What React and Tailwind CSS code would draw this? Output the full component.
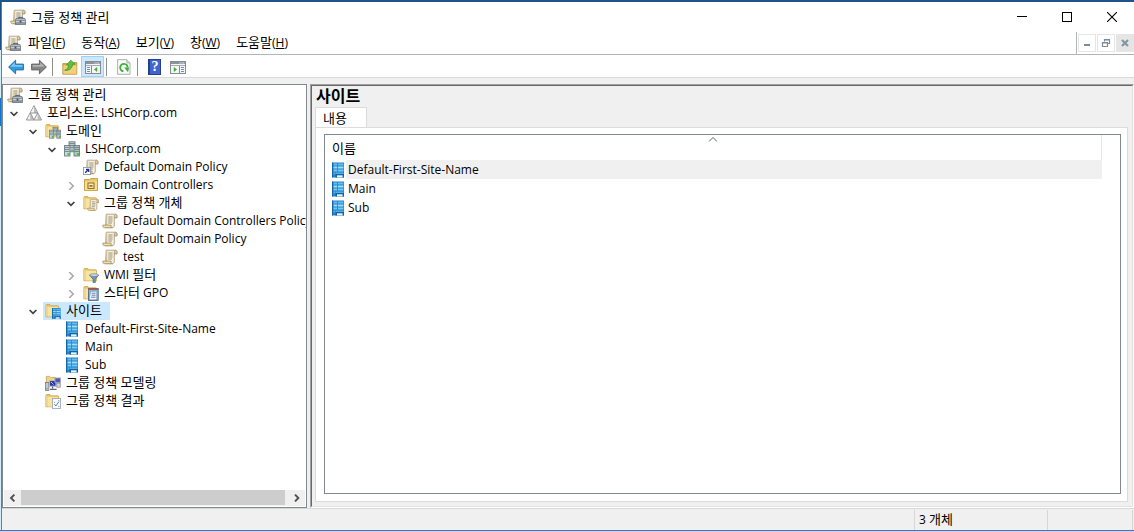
import { useState } from "react";

/* ---------- text ---------- */

/* Hangul runs are set one size up so that they balance the Latin letters. */
function Label({ text }) {
  const parts = text.split(/([가-힣]+(?: [가-힣]+)*)/).filter(Boolean);
  return parts.map((part, i) => (
    <span key={i} className={/[가-힣]/.test(part) ? "text-[13px] leading-none" : ""}>
      {part}
    </span>
  ));
}

/* ---------- icons ---------- */

function Svg({ size = "h-4 w-4", box = "0 0 16 16", children }) {
  return (
    <svg viewBox={box} className={`block shrink-0 ${size}`} aria-hidden="true">
      {children}
    </svg>
  );
}

function ScrollShape() {
  return (
    <>
      <path
        d="M4.2 1.2h8.8c1.2 0 1.9.8 1.9 1.8v1.8h-2.6v7.6c0 1.3-.8 2.3-2.1 2.3H3.5z"
        fill="#f8efd8"
        stroke="#a3967c"
        strokeWidth=".8"
      />
      <path d="M12.3 4.8V3c0-1 .5-1.7 1.3-1.7s1.4.7 1.4 1.7v1.8z" fill="#e0cda0" stroke="#9a8c72" strokeWidth=".7" />
      <path d="M4.6 1.6v10.4" stroke="#cfbf98" strokeWidth="1.2" />
      <path d="M.8 12.1h8.3c-.4.9 0 2.1 1.2 2.6H2.3C1.2 14.7.7 13.4.8 12.1z" fill="#f0dfae" stroke="#a08c5c" strokeWidth=".8" />
      <path d="M6.3 4h4.2M6.3 6h4.2M6.3 8h4.2M6.3 10h3.6" stroke="#8d897c" strokeWidth=".9" />
    </>
  );
}

function ScrollIcon() {
  return (
    <Svg>
      <ScrollShape />
    </Svg>
  );
}

function ConsoleIcon() {
  return (
    <Svg>
      <ScrollShape />
      <path d="M8.6 9.6V8.4h4.2v1.2" fill="none" stroke="#59626b" strokeWidth="1" />
      <path d="M6 9.6h9l.6 2v4H5.4v-4z" fill="#8b97a3" stroke="#59636d" strokeWidth=".7" />
      <path d="M6.2 10.4h8.6" stroke="#c6cfd6" strokeWidth=".8" />
      <path d="M5.8 12.6h9.4" stroke="#dfe4e8" strokeWidth=".8" />
      <rect x="9.6" y="11.6" width="1.8" height="2" fill="#474f57" />
    </Svg>
  );
}

function LinkedScrollIcon() {
  return (
    <Svg>
      <ScrollShape />
      <rect x=".4" y="8.4" width="7.2" height="7.2" fill="#fff" stroke="#8b9099" strokeWidth=".8" />
      <path d="M2.2 13.8l3-3M3 10.4h2.7v2.7" fill="none" stroke="#1d2f8f" strokeWidth="1.3" />
    </Svg>
  );
}

function ForestIcon() {
  return (
    <Svg>
      <path d="M8 .6L15.6 15H.4z" fill="#dedede" stroke="#808080" strokeWidth=".8" />
      <path d="M8 1.4v6.4H4.6zM4.3 8.8v5.4H1.4zM11.7 8.8v5.4H8.8z" fill="#f4f4f4" />
      <path d="M8 1.4v6.4h3.4zM4.3 8.8v5.4h2.9zM11.7 8.8v5.4h2.9z" fill="#bcbcbc" />
      <path d="M4.4 8h7.2L8 14.9z" fill="#fff" stroke="#808080" strokeWidth=".8" />
    </Svg>
  );
}

function FolderShape() {
  return (
    <>
      <path d="M.8 2.6c0-.6.3-1 .9-1H5l1.2 1.2h6.6c.5 0 .8.3.8.8v10.2H.8z" fill="#e9c76c" stroke="#c39a3c" strokeWidth=".7" />
      <path d="M2.4 3.8h10.8v9.7H2.4z" fill="#f8e3a0" />
      <path d="M1.2 2.6v11" stroke="#fbeec2" strokeWidth=".7" />
    </>
  );
}

function ServersShape() {
  return (
    <>
      <rect x="5" y=".8" width="6" height="10" fill="#c2d0d6" stroke="#5b6d75" strokeWidth=".8" />
      <rect x=".6" y="4.4" width="5.4" height="10.6" fill="#cbd8dd" stroke="#5b6d75" strokeWidth=".8" />
      <rect x="10" y="4.4" width="5.4" height="10.6" fill="#b7c5cb" stroke="#5b6d75" strokeWidth=".8" />
      <path
        d="M5.4 2.6h5.2M5.4 4.6h5.2M6.4 6.6h3.2M1 6.4h4.6M1 8.4h4.6M1 10.4h4.6M10.4 6.4H15M10.4 8.4H15M10.4 10.4H15"
        stroke="#5d7078"
        strokeWidth=".8"
      />
      <path d="M3.4 12h2.2v2.6H3.4zM12.8 12H15v2.6h-2.2zM7.2 8.4h2v2h-2z" fill="#4fc14a" />
    </>
  );
}

function DomainIcon() {
  return (
    <Svg>
      <ServersShape />
    </Svg>
  );
}

function DomainsFolderIcon() {
  return (
    <Svg>
      <FolderShape />
      <g transform="translate(4.2 3.8) scale(.76)">
        <ServersShape />
      </g>
    </Svg>
  );
}

function OuIcon() {
  return (
    <Svg>
      <path d="M1.5 2.5h5l1.2-1h6.8v12h-13z" fill="#e9c76c" stroke="#c39a3c" strokeWidth=".9" />
      <path d="M2 4.5h12v8.6H2z" fill="#f7de90" />
      <rect x="5" y="6" width="6" height="5.4" fill="#fdf0c0" stroke="#866514" strokeWidth="1" />
      <rect x="6.4" y="8" width="3.2" height="1.8" fill="#9a7a22" />
    </Svg>
  );
}

function GpoFolderIcon() {
  return (
    <Svg>
      <FolderShape />
      <g transform="translate(4 3.6) scale(.8)">
        <ScrollShape />
      </g>
    </Svg>
  );
}

function WmiFolderIcon() {
  return (
    <Svg>
      <FolderShape />
      <path d="M6.6 8.2h9l-3.3 4v3.3h-2.2v-3.3z" fill="#7796b5" stroke="#46617d" strokeWidth=".7" />
      <ellipse cx="11.1" cy="8.1" rx="4.4" ry="1.3" fill="#d5e2ee" stroke="#5f7b97" strokeWidth=".7" />
    </Svg>
  );
}

function StarterFolderIcon() {
  return (
    <Svg>
      <FolderShape />
      <rect x="5.4" y="3.6" width="9.8" height="11.8" fill="#9db8d6" stroke="#3d5e86" strokeWidth=".8" />
      <path d="M5 4.2h10.4" stroke="#a8543c" strokeWidth="1.4" />
      <path d="M7.6 6.2h6.2v8.6H6.4v-2z" fill="#f6f9fd" stroke="#5b7aa3" strokeWidth=".6" />
      <path d="M8.6 8.2h4M8.6 10.2h4M8 12.2h4.6" stroke="#4c71a2" strokeWidth=".9" />
    </Svg>
  );
}

function SiteShape() {
  return (
    <>
      <rect x="0" y="0" width="12" height="15" fill="#2583cb" />
      <rect x="0" y="0" width="1" height="15" fill="#1764a8" />
      <path d="M1.6 1h3.6v2H1.6zM6 1h5.4v2H6z" fill="#5fbdf0" />
      <path d="M1.6 4h3.6v2H1.6zM6 4h5.4v2H6z" fill="#9be0fb" />
      <path d="M1.6 7h3.6v2H1.6zM6 7h5.4v2H6z" fill="#6fcaf5" />
      <path d="M1.6 10h1.8v2H1.6zM4 10h7.4v1.4H4z" fill="#4fb0e6" />
      <path d="M3.6 11.6H12V15H3.6z" fill="#175f9f" />
      <path d="M5 12.8h5.6V15H5z" fill="#e3f5fd" />
    </>
  );
}

function SiteIcon() {
  return (
    <Svg>
      <g transform="translate(2 0.5)">
        <SiteShape />
      </g>
    </Svg>
  );
}

function SitesFolderIcon() {
  return (
    <Svg>
      <FolderShape />
      <g transform="translate(7 5) scale(.72)">
        <SiteShape />
      </g>
    </Svg>
  );
}

function ModelingIcon() {
  return (
    <Svg>
      <path d="M1.4 1.4h3.2l1 1h4.6v7H1.4z" fill="#f2d581" stroke="#c39a3c" strokeWidth=".7" />
      <rect x=".5" y="7.4" width="3.4" height="8" fill="#c5c9cf" stroke="#6c7078" strokeWidth=".7" />
      <rect x="4.6" y="5.6" width="6.4" height="5.6" fill="#2336a8" stroke="#b7bcc6" strokeWidth="1" />
      <path d="M6 7l2.6 2.6" stroke="#a9bcf5" strokeWidth="1" />
      <rect x="10" y="3" width="5.4" height="4.6" fill="#4c5bb4" stroke="#a2a7b4" strokeWidth=".9" />
      <rect x="11.8" y="8.2" width="3.4" height="4" fill="#d4d7dc" stroke="#7b7f88" strokeWidth=".7" />
      <path d="M7.6 11.4v2M5 14.4h6.6" stroke="#5d626b" strokeWidth="1.2" />
      <path d="M1.2 13.8h1.4" stroke="#39b54a" strokeWidth="1.2" />
    </Svg>
  );
}

function ResultsIcon() {
  return (
    <Svg>
      <FolderShape />
      <rect x="7.4" y="5.4" width="8.2" height="10" fill="#fbfcfe" stroke="#97a1ad" strokeWidth=".8" />
      <path d="M9 9.4h1.2M13 7.6h1.4M13 13.4h1.4" stroke="#8aa0ba" strokeWidth=".9" />
      <path d="M9.2 11l1.7 2 3-4.4" fill="none" stroke="#5b82b6" strokeWidth="1" />
    </Svg>
  );
}

/* toolbar icons */

function ArrowIcon({ dir }) {
  const back = dir === "back";
  return (
    <Svg>
      <g transform={back ? undefined : "matrix(-1 0 0 1 16 0)"}>
        <path
          d="M.6 8l7-6.8v3.9h7.8v5.8H7.6v3.9z"
          fill={back ? "#2f9be0" : "#858585"}
          stroke={back ? "#2a6f9f" : "#666"}
          strokeWidth="1"
          strokeLinejoin="round"
        />
        <path d="M2.2 7.8l4.6-4.5v2.8h7.6v1.7z" fill={back ? "#7cc8f5" : "#b3b3b3"} />
      </g>
    </Svg>
  );
}

function UpFolderIcon() {
  return (
    <Svg>
      <path d="M.8 4.6h6.4l1.2-1h6.4v11.6H.8z" fill="#d9b04c" stroke="#b98f35" strokeWidth=".8" />
      <path d="M1.4 6.4h13v8.4h-13z" fill="#f1d07a" />
      <path d="M2.6 11.2c2.4-.6 3.8-2.6 4-5.2H4.4L8.8 1.2l4.2 4h-2.4c-.2 4-3.6 7-8 6z" fill="#5cc140" stroke="#3c8f2e" strokeWidth=".7" />
    </Svg>
  );
}

function PaneIcon({ side }) {
  const left = side === "left";
  return (
    <Svg>
      <rect x=".5" y="2.5" width="15" height="12" fill="#f5f5f5" stroke="#858c94" />
      <path d="M1 3h14v2H1z" fill="#8b939c" />
      <path d="M9.5 4h1M11.5 4h1M13.2 4h1" stroke="#fff" />
      <path d="M1 6.5h14" stroke="#a4abb3" />
      {left ? (
        <>
          <path d="M6.5 7v7.5" stroke="#858c94" />
          <path d="M2 8.5h3M2 10.5h3M2 12.5h3" stroke="#6a8fbf" />
          <path d="M12.2 8v5L9 10.5z" fill="#3eac3a" />
        </>
      ) : (
        <>
          <path d="M9.5 7v7.5" stroke="#858c94" />
          <path d="M11 8.5h3M11 10.5h3M11 12.5h3" stroke="#6a8fbf" />
          <path d="M3.8 8v5L7 10.5z" fill="#3eac3a" />
        </>
      )}
    </Svg>
  );
}

function RefreshIcon() {
  return (
    <Svg>
      <path d="M1.6.7h9.2L14 3.9v11.4H1.6z" fill="#fafafa" stroke="#a5a5a5" strokeWidth=".9" />
      <path d="M10.8.7v3.2H14" fill="#dcdcdc" stroke="#a5a5a5" strokeWidth=".8" />
      <path d="M7.4 12.2a3.7 3.7 0 1 1 4.2-3.6" fill="none" stroke="#3fae3b" strokeWidth="1.9" />
      <path d="M8.2 8.6h5L12 13.2z" fill="#3fae3b" />
    </Svg>
  );
}

function HelpIcon() {
  return (
    <span className="flex h-4 w-[13px] items-center justify-center border border-l-2 border-[#26408f] bg-[#3f66cc] font-['Liberation_Serif',serif] text-[14px] leading-none font-bold text-white">
      ?
    </span>
  );
}

function Chevron({ open }) {
  return (
    <Svg size="h-2 w-2" box="0 0 8 8">
      {open ? (
        <path d="M.6 2L4 5.4 7.4 2" fill="none" stroke="#404040" strokeWidth="1.7" />
      ) : (
        <path d="M2.2 0l4 4-4 4" fill="none" stroke="#a6a6a6" strokeWidth="1.5" />
      )}
    </Svg>
  );
}

/* ---------- data ---------- */

const TREE = {
  label: "그룹 정책 관리",
  icon: ConsoleIcon,
  children: [
    {
      label: "포리스트: LSHCorp.com",
      icon: ForestIcon,
      open: true,
      children: [
        {
          label: "도메인",
          icon: DomainsFolderIcon,
          open: true,
          children: [
            {
              label: "LSHCorp.com",
              icon: DomainIcon,
              open: true,
              children: [
                { label: "Default Domain Policy", icon: LinkedScrollIcon },
                { label: "Domain Controllers", icon: OuIcon, children: [] },
                {
                  label: "그룹 정책 개체",
                  icon: GpoFolderIcon,
                  open: true,
                  children: [
                    { label: "Default Domain Controllers Policy", icon: ScrollIcon },
                    { label: "Default Domain Policy", icon: ScrollIcon },
                    { label: "test", icon: ScrollIcon },
                  ],
                },
                { label: "WMI 필터", icon: WmiFolderIcon, children: [] },
                { label: "스타터 GPO", icon: StarterFolderIcon, children: [] },
              ],
            },
          ],
        },
        {
          label: "사이트",
          icon: SitesFolderIcon,
          open: true,
          selected: true,
          children: [
            { label: "Default-First-Site-Name", icon: SiteIcon },
            { label: "Main", icon: SiteIcon },
            { label: "Sub", icon: SiteIcon },
          ],
        },
        { label: "그룹 정책 모델링", icon: ModelingIcon },
        { label: "그룹 정책 결과", icon: ResultsIcon },
      ],
    },
  ],
};

const MENUS = [
  ["파일", "F"],
  ["동작", "A"],
  ["보기", "V"],
  ["창", "W"],
  ["도움말", "H"],
];

const SITES = ["Default-First-Site-Name", "Main", "Sub"];

/* ---------- tree ---------- */

function NodeButton({ node }) {
  const Icon = node.icon;
  return (
    <button
      type="button"
      className={`flex h-[18px] shrink-0 items-center gap-[5px] pl-0.5 whitespace-nowrap ${
        node.selected ? "bg-[#cce8ff] pr-2" : ""
      }`}
    >
      <Icon />
      <span>
        <Label text={node.label} />
      </span>
    </button>
  );
}

function TreeNode({ node }) {
  const [open, setOpen] = useState(Boolean(node.open));
  return (
    <li role="treeitem" aria-expanded={node.children ? open : undefined} aria-selected={Boolean(node.selected)}>
      <div className="flex h-[18px] items-center">
        {node.children ? (
          <button
            type="button"
            aria-label={node.label}
            onClick={() => setOpen(!open)}
            className="flex h-[18px] w-3.5 shrink-0 items-center pt-0.5"
          >
            <Chevron open={open} />
          </button>
        ) : (
          <span className="w-3.5 shrink-0" />
        )}
        <NodeButton node={node} />
      </div>
      {open && node.children.length > 0 && (
        <ul role="group" className="pl-[19px]">
          {node.children.map((child) => (
            <TreeNode key={child.label} node={child} />
          ))}
        </ul>
      )}
    </li>
  );
}

function TreePane() {
  return (
    <nav className="flex w-[305px] shrink-0 flex-col border border-[#828790] bg-white">
      <ul role="tree" className="min-h-0 flex-1 overflow-hidden pt-px">
        <li role="treeitem" aria-expanded="true">
          <div className="pl-0.5">
            <NodeButton node={TREE} />
          </div>
          <ul role="group" className="pl-[7px]">
            {TREE.children.map((child) => (
              <TreeNode key={child.label} node={child} />
            ))}
          </ul>
        </li>
      </ul>
      <div className="mx-px mb-px flex h-4 bg-[#f0f0f0]">
        <button type="button" aria-label="왼쪽" className="flex w-[17px] items-center justify-center">
          <Svg size="h-2 w-2" box="0 0 8 8">
            <path d="M5.4 .6L2 4l3.4 3.4" fill="none" stroke="#505050" strokeWidth="1.9" />
          </Svg>
        </button>
        <div className="h-[15px] flex-1 bg-[#cdcdcd]" />
        <button type="button" aria-label="오른쪽" className="flex w-5 items-center justify-center pl-1">
          <Svg size="h-2 w-2" box="0 0 8 8">
            <path d="M2 .6L5.4 4 2 7.4" fill="none" stroke="#505050" strokeWidth="1.9" />
          </Svg>
        </button>
      </div>
    </nav>
  );
}

/* ---------- right pane ---------- */

function DetailPane() {
  return (
    <main className="flex min-w-0 flex-1 flex-col border border-t-[#a0a0a0] border-r-white border-b-white border-l-[#a0a0a0]">
      <div className="flex min-h-0 flex-1 flex-col border border-t-[#696969] border-r-[#e3e3e3] border-b-[#e3e3e3] border-l-[#696969] pr-1 pb-1 pl-[3px]">
        <h1 className="pl-px text-[16px] leading-[21px] font-bold">사이트</h1>
        <div role="tablist" className="-mb-px flex">
          <button
            type="button"
            role="tab"
            aria-selected="true"
            className="h-[21px] w-[52px] border border-b-0 border-[#dcdcdc] bg-white pl-[7px] text-left text-[13px] leading-[18px]"
          >
            내용
          </button>
        </div>
        <div className="flex min-h-0 flex-1 flex-col border border-[#dcdcdc] bg-white pt-1.5 pr-1.5 pb-[7px] pl-2">
          <div className="min-h-0 flex-1 overflow-hidden border border-[#828790] pr-[18px]">
            <table className="w-full border-collapse">
              <thead>
                <tr>
                  <th className="relative h-[25px] border-r border-[#e5e5e5] py-0 pt-px pl-[7px] text-left text-[13px] font-normal">
                    이름
                    <svg
                      viewBox="0 0 9 5"
                      className="absolute top-0.5 left-1/2 h-[5px] w-[9px] -translate-x-1/2"
                      aria-hidden="true"
                    >
                      <path d="M.5 4.5l4-4 4 4" fill="none" stroke="#606060" />
                    </svg>
                  </th>
                </tr>
              </thead>
              <tbody>
                {SITES.map((name, i) => (
                  <tr key={name}>
                    <td className="h-[19px] p-0">
                      <div className="flex h-[19px] items-center pl-[5px]">
                        <SiteIcon />
                        <span className={`flex-1 pl-0.5 leading-[19px] ${i === 0 ? "bg-[#f0f0f0]" : ""}`}>{name}</span>
                      </div>
                    </td>
                  </tr>
                ))}
              </tbody>
            </table>
          </div>
        </div>
      </div>
    </main>
  );
}

/* ---------- window ---------- */

function TitleBar() {
  return (
    <header className="flex h-[30px] shrink-0 items-center bg-white pl-2">
      <ConsoleIcon />
      <span className="flex-1 pl-[5px] text-[13px]">그룹 정책 관리</span>
      <button type="button" aria-label="최소화" className="flex h-full w-[45px] items-center justify-center">
        <Svg size="h-2.5 w-2.5" box="0 0 10 10">
          <path d="M0 4.5h10" stroke="#000" />
        </Svg>
      </button>
      <button type="button" aria-label="최대화" className="flex h-full w-[45px] items-center justify-center">
        <Svg size="h-2.5 w-2.5" box="0 0 10 10">
          <rect x=".5" y=".5" width="9" height="9" fill="none" stroke="#000" />
        </Svg>
      </button>
      <button type="button" aria-label="닫기" className="flex h-full w-[45px] items-center justify-center">
        <Svg size="h-2.5 w-2.5" box="0 0 10 10">
          <path d="M0 0l10 10M10 0L0 10" stroke="#000" strokeWidth="1.1" />
        </Svg>
      </button>
    </header>
  );
}

function MenuBar() {
  return (
    <div className="flex h-[23px] shrink-0 border-b border-[#b4b4b4] bg-white pl-[3px]">
      <div className="flex flex-1 items-center">
        <ConsoleIcon />
        <nav className="flex gap-4 pl-[7px]">
          {MENUS.map(([name, key]) => (
            <button key={name} type="button" className="whitespace-nowrap">
              <Label text={name} />(<span className="underline">{key}</span>)
            </button>
          ))}
        </nav>
      </div>
      <div className="flex items-center gap-px border-l border-[#b4b4b4] pl-px">
        <button type="button" aria-label="자식 창 최소화" className="flex h-[18px] w-[18px] items-center justify-center border border-[#e5e5e5]">
          <Svg size="h-2.5 w-2.5" box="0 0 10 10">
            <path d="M2 7h6" stroke="#7c8b98" strokeWidth="2" />
          </Svg>
        </button>
        <button type="button" aria-label="자식 창 복원" className="flex h-[18px] w-[18px] items-center justify-center border border-[#e5e5e5]">
          <Svg size="h-2.5 w-2.5" box="0 0 10 10">
            <path d="M3.5 3.5v-2h5v4H7M3 2h6" fill="none" stroke="#7c8b98" strokeWidth="1.2" />
            <path d="M1.5 4.5h5v4h-5zM1 5h6" fill="none" stroke="#7c8b98" strokeWidth="1.2" />
          </Svg>
        </button>
        <button type="button" aria-label="자식 창 닫기" className="flex h-[18px] w-[18px] items-center justify-center bg-[#e5e5e5]">
          <Svg size="h-2.5 w-2.5" box="0 0 10 10">
            <path d="M2 2l6 6M8 2L2 8" stroke="#8495a2" strokeWidth="2.2" />
          </Svg>
        </button>
      </div>
    </div>
  );
}

function Tool({ label, pressed, children }) {
  return (
    <button
      type="button"
      aria-label={label}
      aria-pressed={pressed}
      className={`flex h-[21px] w-[23px] items-center justify-center ${pressed ? "border border-[#99d1ff] bg-[#cce8ff]" : ""}`}
    >
      {children}
    </button>
  );
}

function Divider() {
  return <span className="mr-[5px] ml-0.5 h-[18px] w-px bg-[#8f8f8f]" />;
}

function ToolBar() {
  return (
    <div className="flex h-[23px] shrink-0 items-center border-b border-[#d9d9d9] bg-white pt-px pl-0.5">
      <Tool label="뒤로"><ArrowIcon dir="back" /></Tool>
      <Tool label="앞으로"><ArrowIcon dir="forward" /></Tool>
      <Divider />
      <Tool label="위로"><UpFolderIcon /></Tool>
      <Tool label="콘솔 트리 표시" pressed><PaneIcon side="left" /></Tool>
      <Divider />
      <Tool label="새로 고침"><RefreshIcon /></Tool>
      <Divider />
      <Tool label="도움말"><HelpIcon /></Tool>
      <Tool label="작업 창 표시"><PaneIcon side="right" /></Tool>
    </div>
  );
}

function StatusBar() {
  return (
    <footer className="flex h-[22px] shrink-0 border-t border-[#d7d7d7] pt-px pr-px">
      <div className="flex-1 border-r border-[#d7d7d7]" />
      <div className="w-[133px] border-r border-[#d7d7d7] pl-1 leading-[20px]">
        <Label text="3 개체" />
      </div>
      <div className="w-[85px] border-r border-[#d7d7d7]" />
    </footer>
  );
}

export default function App() {
  return (
    <div className="flex h-screen border-t-2 border-b border-t-[#1f5488] border-b-[#1883d7] font-['Open_Sans','Noto_Sans_CJK_KR',sans-serif] text-[12px] leading-[18px] text-black">
      <div className="flex w-px shrink-0 flex-col bg-[#d3eef8]">
        <div className="h-12 bg-[#1c4f86]" />
        <div className="h-12" />
        <div className="h-7 bg-[#0f78d0]" />
      </div>
      <div className="flex min-w-0 flex-1 flex-col border-l border-[#4a87b0] bg-[#f0f0f0]">
        <TitleBar />
        <MenuBar />
        <ToolBar />
        <div className="flex min-h-0 flex-1 gap-[3px] pt-1.5">
          <TreePane />
          <DetailPane />
        </div>
        <StatusBar />
      </div>
    </div>
  );
}
